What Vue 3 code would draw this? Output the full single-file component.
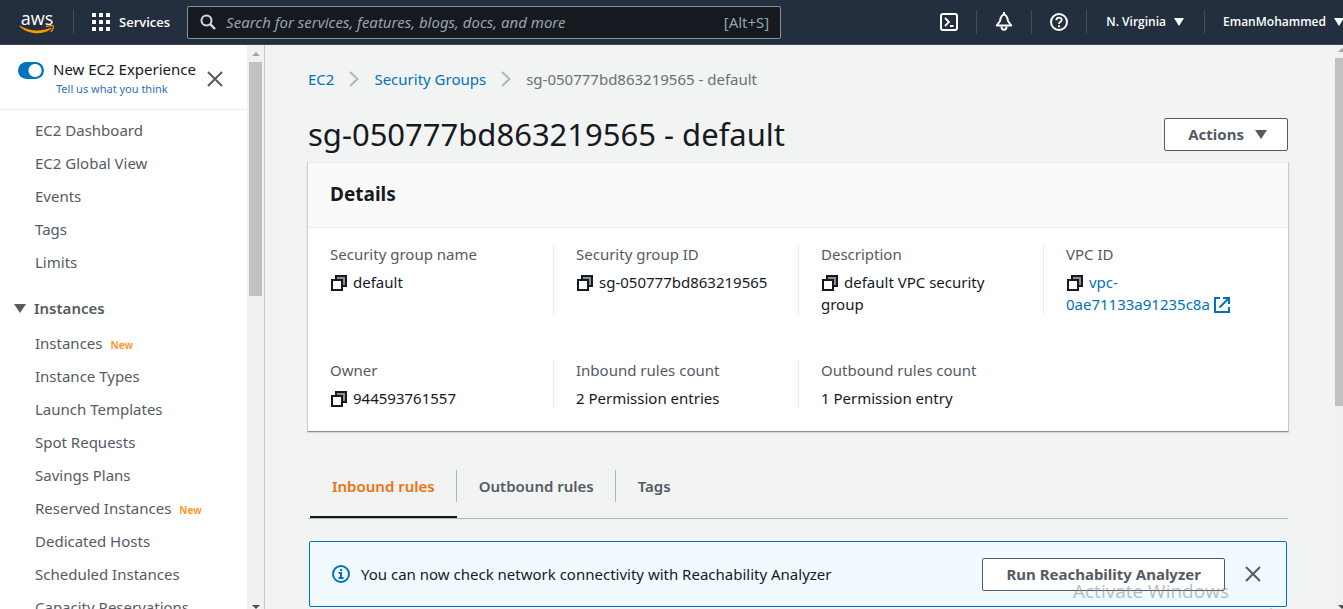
<script setup>
import { ref } from 'vue'

const newExperience = ref(true)

const topLinks = ['EC2 Dashboard', 'EC2 Global View', 'Events', 'Tags', 'Limits']

const instanceLinks = [
  { label: 'Instances', isNew: true },
  { label: 'Instance Types' },
  { label: 'Launch Templates' },
  { label: 'Spot Requests' },
  { label: 'Savings Plans' },
  { label: 'Reserved Instances', isNew: true },
  { label: 'Dedicated Hosts' },
  { label: 'Scheduled Instances' },
  { label: 'Capacity Reservations' },
]

const details = [
  { label: 'Security group name', value: 'default', copy: true },
  { label: 'Security group ID', value: 'sg-050777bd863219565', copy: true },
  { label: 'Description', value: 'default VPC security group', copy: true },
  { label: 'VPC ID', prefix: 'vpc-', value: '0ae71133a91235c8a', copy: true, link: true },
  { label: 'Owner', value: '944593761557', copy: true },
  { label: 'Inbound rules count', value: '2 Permission entries' },
  { label: 'Outbound rules count', value: '1 Permission entry' },
]

const tabs = ['Inbound rules', 'Outbound rules', 'Tags']
const activeTab = ref('Inbound rules')
</script>

<template>
  <div class="console">
    <header class="topbar">
      <a class="logo" href="#" aria-label="AWS home">
        <span class="logo-word">aws</span>
        <svg class="logo-smile" width="36" height="9" viewBox="0 0 36 9" fill="#ff9900">
          <path d="M1 .8C10 6.500 22 7 31.500 2.800C32.500 2.500 32.800 3.300 32 4C23 10.500 9 9.500 .8 1.800C.2 1.100 .4 .5 1 .8Z" />
          <path d="M27.500 1.300C31 .7 33.600 .5 34.200 1.100C34.700 2 33.600 4.800 32.200 6.600" fill="none" stroke="#ff9900" stroke-width="1.300" stroke-linecap="round" />
        </svg>
      </a>
      <button class="services" type="button">
        <svg width="18" height="18" viewBox="0 0 18 18" fill="#fff">
          <rect v-for="n in 9" :key="n" :x="((n - 1) % 3) * 7" :y="Math.floor((n - 1) / 3) * 7" width="4" height="4" />
        </svg>
        Services
      </button>
      <form class="search" role="search" @submit.prevent>
        <svg width="16" height="16" viewBox="0 0 16 16" fill="none" stroke="#d5dbdb" stroke-width="2">
          <circle cx="6.500" cy="6.500" r="5" />
          <path d="M10.200 10.200L15 15" stroke-width="2.400" />
        </svg>
        <input type="search" aria-label="Search" placeholder="Search for services, features, blogs, docs, and more" />
        <span class="shortcut">[Alt+S]</span>
      </form>
      <nav class="tools" aria-label="Account tools">
        <button class="tool" type="button" aria-label="CloudShell">
          <svg width="18" height="18" viewBox="0 0 18 18" fill="none" stroke="#fff" stroke-width="2">
            <rect x="1" y="1" width="16" height="16" rx="2" />
            <path d="M5 5L9 9L5 13M10 13H13.500" stroke-width="1.800" />
          </svg>
        </button>
        <button class="tool" type="button" aria-label="Notifications">
          <svg width="18" height="20" viewBox="0 0 18 20" fill="none" stroke="#fff" stroke-width="2" stroke-linejoin="round">
            <path d="M9 2.500C6 3 5.500 6 5 9L1.800 13.500H16.200L13 9C12.500 6 12 3 9 2.500Z" />
            <path d="M6.500 14.500C6.500 18.800 11.500 18.800 11.500 14.500M9 0V2" />
          </svg>
        </button>
        <button class="tool" type="button" aria-label="Help">
          <svg width="18" height="18" viewBox="0 0 18 18" fill="none" stroke="#fff" stroke-width="2">
            <circle cx="9" cy="9" r="8" />
            <path d="M6.300 7.200C6.300 3.600 11.800 3.800 11.700 7C11.600 8.800 9 8.800 9 11M9 12.300V14.200" stroke-width="1.800" />
          </svg>
        </button>
        <button class="menu" type="button">N. Virginia <span class="caret"></span></button>
        <button class="menu account" type="button">EmanMohammed <span class="caret"></span></button>
      </nav>
    </header>

    <div class="body">
      <aside class="sidebar">
        <div class="side-scroll">
          <div class="side-head">
            <input id="experience" v-model="newExperience" class="toggle" type="checkbox" role="switch" />
            <div class="side-title">
              <label for="experience">New EC2 Experience</label>
              <a href="#">Tell us what you think</a>
            </div>
            <button class="close" type="button" aria-label="Close navigation">
              <svg width="16" height="16" viewBox="0 0 16 16" stroke="#545b64" stroke-width="2"><path d="M1 1L15 15M15 1L1 15" /></svg>
            </button>
          </div>
          <nav class="side-nav" aria-label="EC2">
            <a v-for="l in topLinks" :key="l" href="#">{{ l }}</a>
            <button class="group" type="button"><span class="caret"></span>Instances</button>
            <a v-for="l in instanceLinks" :key="l.label" href="#">{{ l.label }}<span v-if="l.isNew" class="new">New</span></a>
          </nav>
        </div>
        <div class="scrollbar side-bar" aria-hidden="true">
          <span class="arrow up"></span>
          <span class="thumb"></span>
          <span class="arrow down"></span>
        </div>
      </aside>

      <main class="content">
        <nav class="crumbs" aria-label="Breadcrumb">
          <a href="#">EC2</a>
          <svg width="10" height="16" viewBox="0 0 10 16" fill="none" stroke="#aab7b8" stroke-width="2"><path d="M1 1L8.500 8L1 15" /></svg>
          <a href="#">Security Groups</a>
          <svg width="10" height="16" viewBox="0 0 10 16" fill="none" stroke="#aab7b8" stroke-width="2"><path d="M1 1L8.500 8L1 15" /></svg>
          <span>sg-050777bd863219565 - default</span>
        </nav>

        <div class="title-row">
          <h1>sg-050777bd863219565 - default</h1>
          <button class="btn actions" type="button">Actions <span class="caret"></span></button>
        </div>

        <section class="card">
          <h2>Details</h2>
          <dl class="grid">
            <div v-for="d in details" :key="d.label" class="cell">
              <dt>{{ d.label }}</dt>
              <dd>
                <button v-if="d.copy" class="copy" type="button" :aria-label="'Copy ' + d.label">
                  <svg width="16" height="16" viewBox="0 0 16 16" stroke="#16191f" stroke-width="2">
                    <rect x="5" y="1" width="10" height="10" fill="#879196" />
                    <rect x="1" y="5" width="10" height="10" fill="#fff" />
                  </svg>
                </button>
                <a v-if="d.link" href="#">{{ d.prefix }}<wbr /><span class="keep">{{ d.value }}
                  <svg class="external" width="16" height="16" viewBox="0 0 16 16" fill="none" stroke="#0073bb" stroke-width="2">
                    <path d="M6 1H1V15H15V10M9 1H15V7M15 1L5.500 10.500" />
                  </svg></span>
                </a>
                <template v-else>{{ d.value }}</template>
              </dd>
            </div>
          </dl>
        </section>

        <div class="tabs" role="tablist">
          <button
            v-for="t in tabs"
            :key="t"
            class="tab"
            :class="{ active: t === activeTab }"
            type="button"
            role="tab"
            :aria-selected="t === activeTab"
            @click="activeTab = t"
          ><span>{{ t }}</span></button>
        </div>

        <div class="alert" role="status">
          <svg width="18" height="18" viewBox="0 0 18 18" fill="none" stroke="#0073bb" stroke-width="2">
            <circle cx="9" cy="9" r="8" />
            <path d="M9 4V6M6.500 8H9V13M6.500 13H11.500" />
          </svg>
          <p>You can now check network connectivity with Reachability Analyzer</p>
          <button class="btn" type="button">Run Reachability Analyzer</button>
          <button class="close" type="button" aria-label="Dismiss">
            <svg width="16" height="16" viewBox="0 0 16 16" stroke="#545b64" stroke-width="2"><path d="M1 1L15 15M15 1L1 15" /></svg>
          </button>
        </div>
      </main>

      <div class="scrollbar page-bar" aria-hidden="true">
        <span class="arrow up"></span>
        <span class="thumb"></span>
        <span class="arrow down"></span>
      </div>
    </div>

    <div class="watermark">
      <strong>Activate Windows</strong>
      <span>Go to Settings to activate Windows.</span>
    </div>
  </div>
</template>

<style>
body {
  overflow: hidden;
}
</style>

<style scoped>
.console {
  position: relative;
  display: flex;
  flex-direction: column;
  height: 100vh;
  overflow: hidden;
  background: #f2f3f3;
  color: #16191f;
  font: 15px/22px "Noto Sans", "Open Sans", sans-serif;
}
.console * {
  box-sizing: border-box;
}
button {
  padding: 0;
  border: 0;
  background: none;
  color: inherit;
  font: inherit;
}
a {
  color: #0073bb;
  text-decoration: none;
}
svg {
  display: block;
  flex: none;
}
.caret {
  flex: none;
  border: 5px solid transparent;
  border-top: 8px solid currentColor;
  border-bottom: 0;
}

.topbar {
  display: flex;
  flex: none;
  align-items: center;
  height: 45px;
  padding-left: 20px;
  border-bottom: 1px solid #414750;
  background: #232f3e;
  color: #fff;
}
.logo {
  display: flex;
  flex-direction: column;
  align-items: center;
  width: 34px;
  color: #fff;
}
.logo-word {
  font: 500 18px/14px "Open Sans", sans-serif;
}
.services {
  display: flex;
  align-items: center;
  gap: 9px;
  height: 24px;
  margin-left: 19px;
  padding-left: 18px;
  border-left: 1px solid #414d5c;
  font: 600 13px/18px "Open Sans", sans-serif;
}
.search {
  display: flex;
  flex: 1;
  align-items: center;
  height: 33px;
  margin: 0 141px 0 17px;
  padding: 0 11px 0 12px;
  border: 1px solid #879596;
  border-radius: 2px;
  background: #16191f;
  color: #95a5a6;
}
.search input {
  flex: 1;
  min-width: 0;
  padding: 0 0 0 10px;
  border: 0;
  outline: 0;
  background: none;
  color: #fff;
  font: italic 15px/22px "Noto Sans", sans-serif;
}
.search input::placeholder {
  color: #95a5a6;
  opacity: 1;
}
.tools {
  display: flex;
  flex: none;
  height: 24px;
  margin-right: -1px;
}
.tool {
  display: flex;
  align-items: center;
  justify-content: center;
  width: 55px;
  border-right: 1px solid #414d5c;
}
.menu {
  display: flex;
  align-items: center;
  gap: 8px;
  padding: 0 20px 0 19px;
  font: 600 12px/18px "Open Sans", sans-serif;
}
.account {
  padding: 0 0 0 18px;
  border-left: 1px solid #414d5c;
}

.body {
  display: flex;
  flex: 1;
  min-height: 0;
}
.sidebar {
  display: flex;
  flex: none;
  width: 265px;
  border-right: 1px solid #c4caca;
  background: #fff;
}
.side-scroll {
  flex: 1;
  overflow: hidden;
}
.side-head {
  display: flex;
  height: 65px;
  padding: 15px 24px 0 18px;
  border-bottom: 1px solid #eaeded;
}
.toggle {
  flex: none;
  width: 26px;
  height: 17px;
  margin: 2px 9px 0 0;
  border-radius: 9px;
  background: radial-gradient(circle at 17px 50%, #fff 6px, #0073bb 7px);
  appearance: none;
}
.side-title {
  display: flex;
  flex: 1;
  flex-direction: column;
  min-width: 0;
  white-space: nowrap;
}
.side-title label {
  line-height: 18px;
}
.side-title a {
  padding-left: 3px;
  color: #2f6fbd;
  font-size: 11px;
  line-height: 22px;
}
.close {
  flex: none;
  align-self: center;
}
.side-head .close {
  align-self: flex-start;
  margin-top: 11px;
}
.side-nav {
  display: flex;
  flex-direction: column;
  padding-top: 4px;
}
.side-nav a {
  flex: none;
  padding-left: 35px;
  color: #545b64;
  line-height: 33px;
}
.group {
  display: flex;
  align-items: center;
  gap: 8px;
  margin: 13px 0 2px;
  padding-left: 14px;
  color: #545b64;
  font-weight: 600;
  line-height: 33px;
}
.group .caret {
  border-width: 9px 6px 0;
}
.new {
  margin-left: 8px;
  color: #ff9a2b;
  font-size: 10px;
  font-weight: 700;
  line-height: 10px;
}

.scrollbar {
  display: flex;
  flex: none;
  flex-direction: column;
  align-items: center;
  overflow: hidden;
  background: #f1f1f1;
}
.side-bar {
  width: 17px;
  padding: 7px 0 0;
}
.arrow {
  flex: none;
  border: 4px solid transparent;
}
.up {
  border-top: 0;
  border-bottom-color: #a3a3a3;
}
.down {
  margin-top: auto;
  border-bottom: 0;
  border-top-color: #505050;
}
.thumb {
  flex: none;
  width: 13px;
  height: 42%;
  margin-top: 6px;
  background: #c1c1c1;
}
.page-bar {
  align-items: flex-start;
  width: 9px;
  padding: 3px 0 0 1px;
}
.page-bar .arrow {
  margin-left: 3px;
}
.page-bar .thumb {
  height: 62%;
}

.content {
  display: flex;
  flex: 1;
  flex-direction: column;
  min-width: 0;
  padding: 23px 45px 0 42px;
  overflow: hidden;
}
.crumbs {
  display: flex;
  align-items: center;
  gap: 15px;
  padding-left: 1px;
  color: #687078;
}
.title-row {
  display: flex;
  align-items: center;
  justify-content: space-between;
  margin: 26px 1px 10px;
}
h1 {
  margin: 0;
  font-size: 31px;
  font-weight: 400;
  line-height: 36px;
}
.btn {
  height: 33px;
  padding: 0 23px;
  border: 1px solid #545b64;
  border-radius: 2px;
  background: #fff;
  color: #545b64;
  font-weight: 700;
}
.actions {
  display: flex;
  align-items: center;
  gap: 11px;
  padding-right: 20px;
}
.actions .caret {
  border-width: 9px 6px 0;
}
.card {
  flex: none;
  border: 1px solid #c9cece;
  border-top-color: #eaeded;
  border-bottom-color: #879196;
  background: #fff;
  box-shadow: 0 1px 1px #d5dbdb;
}
h2 {
  margin: 0;
  padding: 19px 22px 21px;
  border-bottom: 1px solid #eaeded;
  background: #fafafa;
  font-size: 19px;
  font-weight: 700;
  line-height: 24px;
}
.grid {
  display: grid;
  grid-template-columns: repeat(4, 1fr);
  row-gap: 44px;
  margin: 0;
  padding: 15px 0 22px;
}
.cell {
  padding: 0 22px;
  border-left: 1px solid #eaeded;
}
.cell:nth-child(4n + 1) {
  border-left: 0;
}
dt {
  margin-bottom: 6px;
  color: #545b64;
}
dd {
  margin: 0;
}
.copy {
  display: inline-block;
  margin: 0 6px 0 1px;
  vertical-align: -3px;
}
.keep {
  white-space: nowrap;
}
.external {
  display: inline-block;
  vertical-align: -3px;
}
.tabs {
  display: flex;
  flex: none;
  margin: 38px 1px 0;
  padding-left: 2px;
  border-bottom: 1px solid #aab7b8;
}
.tab {
  height: 48px;
  padding-bottom: 14px;
  border-bottom: 2px solid transparent;
  color: #545b64;
  font-weight: 600;
}
.tab span {
  display: block;
  padding: 0 21px 0 22px;
  border-right: 1px solid #aab7b8;
  line-height: 32px;
}
.tab:last-child span {
  border-right: 0;
}
.tab.active {
  border-color: #16191f;
  color: #ec7211;
}
.alert {
  display: flex;
  flex: none;
  align-items: center;
  height: 66px;
  margin: 22px 2px 0;
  padding: 0 25px 0 22px;
  border: 1px solid #0073bb;
  border-radius: 2px;
  background: #f1faff;
}
.alert p {
  flex: 1;
  margin: 0 0 0 11px;
}
.alert .close {
  margin-left: 20px;
}
.watermark {
  position: absolute;
  top: 580px;
  left: 1073px;
  display: flex;
  flex-direction: column;
  color: rgba(140, 145, 150, 0.6);
  font-family: "Open Sans", sans-serif;
  white-space: nowrap;
  pointer-events: none;
}
.watermark strong {
  font-size: 19px;
  font-weight: 400;
  line-height: 23px;
}
.watermark span {
  font-size: 14px;
}
</style>
